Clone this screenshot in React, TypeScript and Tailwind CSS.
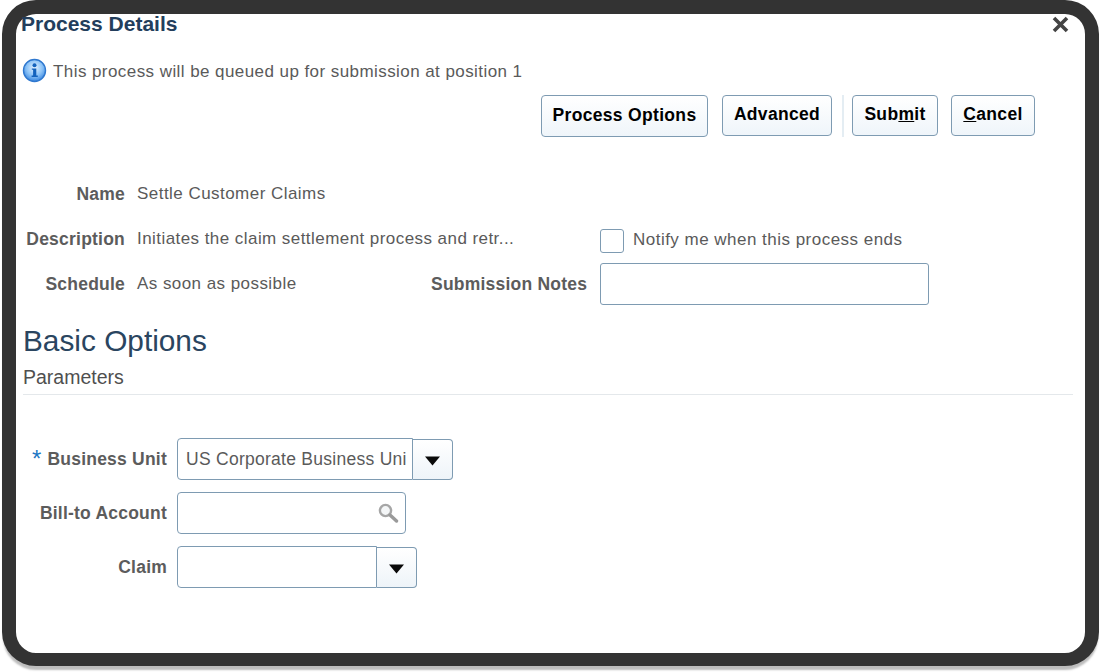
const FONT = "font-['Liberation_Sans',Arial,sans-serif]";

function ActionButton({ children, className = '' }: { children: React.ReactNode; className?: string }) {
  return (
    <button
      className={`flex items-center justify-center rounded-[4px] border border-[#7e9bb2] bg-gradient-to-b from-white to-[#eff5fa] pb-[2px] text-[17.5px] font-bold tracking-[0.32px] text-black ${className}`}
    >
      {children}
    </button>
  );
}

function FieldLabel({ children, className = '' }: { children: React.ReactNode; className?: string }) {
  return (
    <span className={`shrink-0 text-right text-[17.5px] leading-[20px] font-bold tracking-[0.22px] whitespace-nowrap text-[#5c5c5c] ${className}`}>
      {children}
    </span>
  );
}

function DropdownButton() {
  return (
    <div className="flex h-[41px] w-[40px] items-center justify-center rounded-r-[4px] border border-l-0 border-[#7e9bb2] bg-gradient-to-b from-white to-[#eef4f9] pt-[3px]">
      <svg width="15" height="10" viewBox="0 0 15 10">
        <path d="M0 0.5H15L7.5 9.5Z" fill="#0a0a0a" />
      </svg>
    </div>
  );
}

function InfoIcon() {
  return (
    <svg width="25" height="25" viewBox="0 0 25 25" className="shrink-0">
      <defs>
        <radialGradient id="info" cx="50%" cy="38%" r="65%">
          <stop offset="0%" stopColor="#e4f2ff" />
          <stop offset="55%" stopColor="#8cc3f7" />
          <stop offset="100%" stopColor="#2f7fdc" />
        </radialGradient>
      </defs>
      <circle cx="12.5" cy="12.5" r="11" fill="url(#info)" stroke="#2f78cf" strokeWidth="1.4" />
      <circle cx="12.5" cy="7.2" r="2" fill="#1463bd" />
      <path d="M9.8 10.4H14.3V17.6H15.8V19H9.6V17.6H11.1V11.8H9.8Z" fill="#1463bd" />
    </svg>
  );
}

function SearchIcon() {
  return (
    <svg width="21" height="20" viewBox="0 0 21 20">
      <circle cx="7.5" cy="7.5" r="5.6" fill="#f4f6f7" stroke="#a6a6a6" strokeWidth="2.4" />
      <path d="M12 12L18.5 18" stroke="#9a9a9a" strokeWidth="3.4" strokeLinecap="round" />
    </svg>
  );
}

export default function App() {
  return (
    <div className={`h-[672px] w-[1100px] overflow-hidden bg-white pl-[2px] ${FONT}`}>
      <div className="relative h-[666px] w-[1097px] rounded-[34px] border-x-[14px] border-t-[14px] border-b-[13px] border-[#333333] bg-white shadow-[0_5px_2px_-1px_#bdbdbd]">
        <svg width="17" height="17" viewBox="0 0 17 17" className="absolute right-[16px] top-[2px]">
          <path d="M2 2L15 15M15 2L2 15" stroke="#444444" strokeWidth="3.6" />
        </svg>

        <h1 className="ml-[5px] mt-[-2px] text-[21px] leading-[24px] font-bold text-[#233e5c]">Process Details</h1>

        <div className="mt-[22px] ml-[6px] flex h-[25px] items-center gap-[6px]">
          <InfoIcon />
          <span className="relative top-[1px] text-[17px] tracking-[0.43px] text-[#5a5a5a]">
            This process will be queued up for submission at position 1
          </span>
        </div>

        {/* Toolbar */}
        <div className="mt-[12px] ml-[525px] flex h-[42px] items-start">
          <ActionButton className="h-[42px] w-[167px]">Process Options</ActionButton>
          <ActionButton className="ml-[14px] h-[41px] w-[110px]">Advanced</ActionButton>
          <div className="ml-[10px] h-[42px] w-[2px] bg-[#e4edf3]" />
          <ActionButton className="ml-[8px] h-[41px] w-[86px]">
            Sub<span className="underline">m</span>it
          </ActionButton>
          <ActionButton className="ml-[13px] h-[41px] w-[84px]">
            <span className="underline">C</span>ancel
          </ActionButton>
        </div>

        {/* Process summary */}
        <div className="mt-[45px] flex h-[24px] items-center">
          <FieldLabel className="w-[109px]">Name</FieldLabel>
          <span className="ml-[12px] text-[17px] tracking-[0.46px] text-[#5a5a5a]">Settle Customer Claims</span>
        </div>
        <div className="mt-[22px] flex h-[26px] items-start">
          <FieldLabel className="mt-[1px] w-[109px]">Description</FieldLabel>
          <span className="mt-[1px] ml-[12px] w-[463px] text-[17px] leading-[20px] tracking-[0.44px] text-[#5a5a5a]">
            Initiates the claim settlement process and retr...
          </span>
          <div className="mt-[1px] h-[24px] w-[24px] rounded-[3px] border border-[#7e9bb2] bg-white" />
          <span className="mt-[2px] ml-[9px] text-[17px] leading-[20px] tracking-[0.48px] text-[#5a5a5a]">
            Notify me when this process ends
          </span>
        </div>
        <div className="mt-[9px] flex h-[42px] items-center">
          <FieldLabel className="w-[109px]">Schedule</FieldLabel>
          <span className="ml-[12px] w-[294px] text-[17px] tracking-[0.44px] text-[#5a5a5a]">As soon as possible</span>
          <FieldLabel className="w-[156px]">Submission Notes</FieldLabel>
          <div className="ml-[13px] h-[42px] w-[329px] rounded-[3px] border border-[#7e9bb2] bg-white" />
        </div>

        <h2 className="mt-[18px] ml-[7px] text-[29.8px] leading-[36px] text-[#2a4560]">Basic Options</h2>
        <div className="mt-[6px] ml-[7px] text-[19.5px] leading-[24px] text-[#4f4f4f]">Parameters</div>
        <div className="mt-[5px] ml-[7px] h-px w-[1050px] bg-[#e4e8eb]" />

        {/* Parameters form */}
        <div className="mt-[43px] flex h-[42px] items-center">
          <FieldLabel className="w-[151px]">
            <span className="relative top-[-2px] mr-[6px] inline-block h-[20px] align-top text-[24px] leading-[24px] font-normal text-[#1d77c4]">*</span>
            Business Unit
          </FieldLabel>
          <div className="ml-[10px] flex h-[42px] w-[236px] items-center overflow-hidden rounded-l-[4px] border border-[#7e9bb2] bg-white pl-[8px] text-[17.5px] tracking-[0.27px] whitespace-nowrap text-[#5a5a5a]">
            US Corporate Business Uni
          </div>
          <DropdownButton />
        </div>
        <div className="mt-[12px] flex h-[42px] items-center">
          <FieldLabel className="w-[151px]">Bill-to Account</FieldLabel>
          <div className="ml-[10px] flex h-[42px] w-[229px] items-center justify-end rounded-[4px] border border-[#7e9bb2] bg-white pr-[6px]">
            <SearchIcon />
          </div>
        </div>
        <div className="mt-[12px] flex h-[42px] items-center">
          <FieldLabel className="w-[151px]">Claim</FieldLabel>
          <div className="ml-[10px] h-[42px] w-[200px] rounded-l-[4px] border border-[#7e9bb2] bg-white" />
          <DropdownButton />
        </div>
      </div>
    </div>
  );
}
